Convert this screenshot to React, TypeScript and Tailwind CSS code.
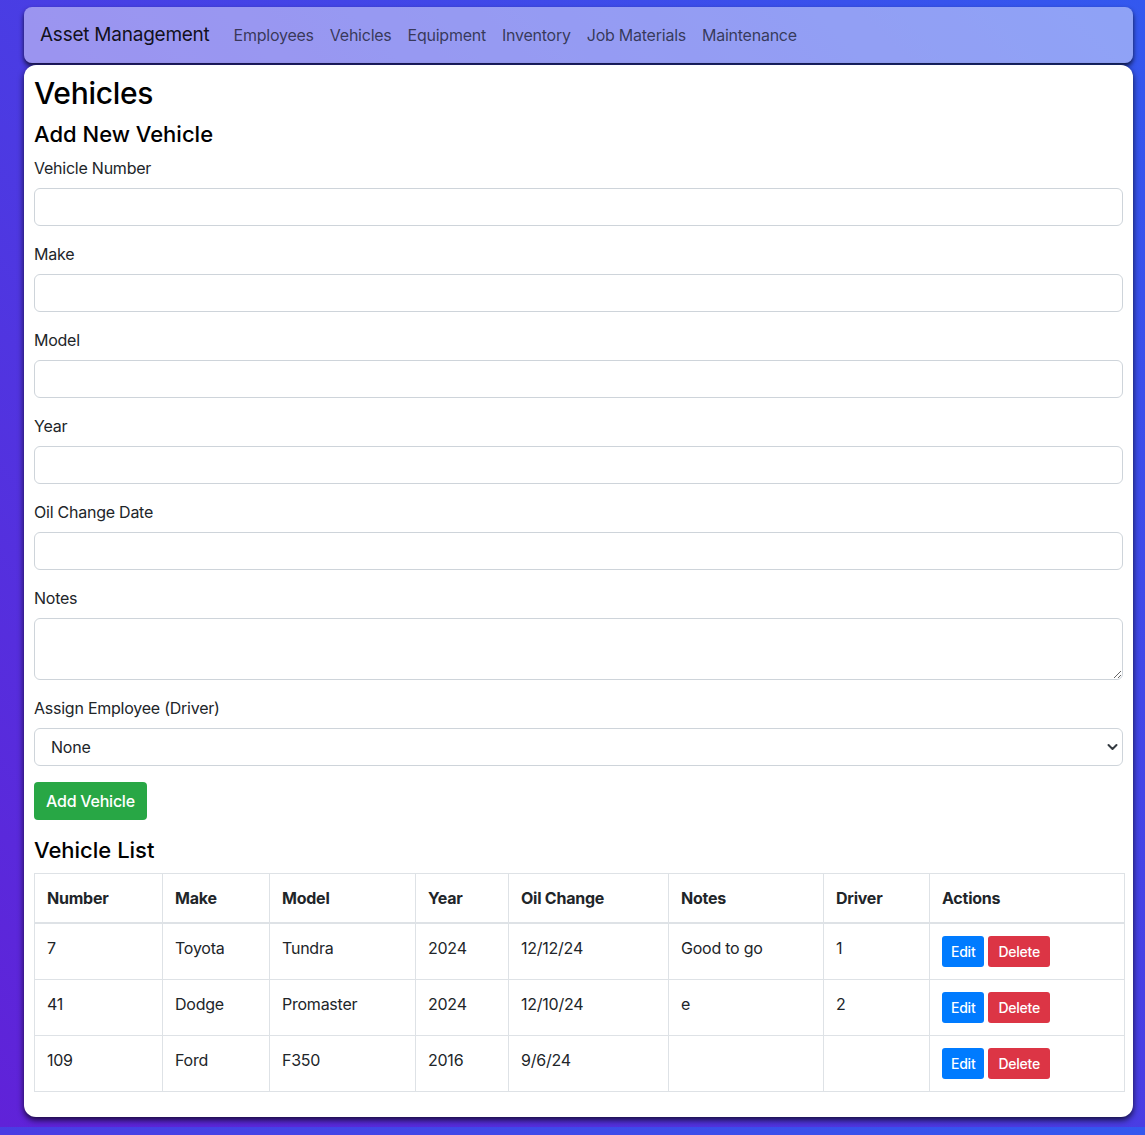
import React from 'react';

const navLinks = ['Employees', 'Vehicles', 'Equipment', 'Inventory', 'Job Materials', 'Maintenance'];

const fields = ['Vehicle Number', 'Make', 'Model', 'Year', 'Oil Change Date'];

const vehicles = [
  { number: '7', make: 'Toyota', model: 'Tundra', year: '2024', oil: '12/12/24', notes: 'Good to go', driver: '1' },
  { number: '41', make: 'Dodge', model: 'Promaster', year: '2024', oil: '12/10/24', notes: 'e', driver: '2' },
  { number: '109', make: 'Ford', model: 'F350', year: '2016', oil: '9/6/24', notes: '', driver: '' },
];

const columns = [
  { label: 'Number', w: 'w-[128px]' },
  { label: 'Make', w: 'w-[107px]' },
  { label: 'Model', w: 'w-[146px]' },
  { label: 'Year', w: 'w-[93px]' },
  { label: 'Oil Change', w: 'w-[160px]' },
  { label: 'Notes', w: 'w-[155px]' },
  { label: 'Driver', w: 'w-[106px]' },
  { label: 'Actions', w: 'w-[195px]' },
];

const inputClass = 'block w-full h-[38px] px-3 rounded-[6px] border border-[#ced4da] bg-white text-[16px] text-[#212529] outline-none';

const App: React.FC = () => {
  return (
    <div
      className="h-[1135px] pt-[7px] pl-6 pr-3 bg-[linear-gradient(to_right_top,#6022d8,#3358ef)] bg-[length:100%_1127px] bg-repeat font-['Inter','Liberation_Sans',sans-serif] tracking-[-0.015em] text-[#212529]"
    >
      {/* navbar */}
      <nav className="h-14 flex items-center px-4 rounded-lg bg-white/45 shadow-[0_3px_5px_rgba(0,0,0,0.75)]">
        <a className="text-[19px] leading-[30px] text-black/90 mr-4 cursor-pointer">Asset Management</a>
        <div className="flex flex-row">
          {navLinks.map((l) => (
            <a key={l} className="px-2 text-[16px] leading-6 text-black/65 cursor-pointer">{l}</a>
          ))}
        </div>
      </nav>

      {/* main card */}
      <div className="mt-[2px] h-[1052px] bg-white rounded-xl px-[10px] pt-[10px] shadow-[0_3px_6px_rgba(0,0,0,0.75)]">
        <h1 className="text-[30px] leading-[36px] font-medium tracking-[-0.01em] text-black mb-[9px]">Vehicles</h1>
        <h2 className="text-[22px] leading-[28px] font-medium tracking-normal text-black mb-2">Add New Vehicle</h2>

        <form onSubmit={(e) => e.preventDefault()}>
          {fields.map((f) => (
            <div key={f} className="mb-4">
              <label className="block text-[16px] leading-6 mb-2">{f}</label>
              <input className={inputClass} />
            </div>
          ))}
          <div className="mb-4">
            <label className="block text-[16px] leading-6 mb-2">Notes</label>
            <textarea rows={2} className="block w-full h-[62px] px-3 py-[6px] rounded-[6px] border border-[#ced4da] text-[16px] outline-none" />
          </div>
          <div className="mb-4">
            <label className="block text-[16px] leading-6 mb-2">Assign Employee (Driver)</label>
            <div className="relative">
              <select className="block w-full h-[38px] pl-4 pr-9 rounded-[6px] border border-[#ced4da] bg-white text-[16px] text-[#212529] appearance-none outline-none">
                <option>None</option>
              </select>
              <svg className="absolute right-[5px] top-[15px] pointer-events-none" width="11" height="8" viewBox="0 0 16 12">
                <path d="M2 3l6 6 6-6" fill="none" stroke="#343a40" strokeWidth="3" strokeLinecap="round" strokeLinejoin="round" />
              </svg>
            </div>
          </div>
          <button type="submit" className="h-[38px] px-3 rounded-[4px] bg-[#28a745] text-white text-[16px] font-medium mb-4">Add Vehicle</button>
        </form>

        <h2 className="text-[22px] leading-[28px] font-medium tracking-normal text-black mb-[9px]">Vehicle List</h2>
        <table className="w-full border-collapse border border-[#dee2e6] text-[16px] table-fixed">
          <thead>
            <tr className="border-b-2 border-[#dee2e6]">
              {columns.map((c) => (
                <th key={c.label} className={`${c.w} border border-[#dee2e6] border-b-2 p-3 text-left font-bold leading-6 align-bottom`}>{c.label}</th>
              ))}
            </tr>
          </thead>
          <tbody>
            {vehicles.map((v) => (
              <tr key={v.number}>
                <td className="border border-[#dee2e6] p-3 align-top leading-6">{v.number}</td>
                <td className="border border-[#dee2e6] p-3 align-top leading-6">{v.make}</td>
                <td className="border border-[#dee2e6] p-3 align-top leading-6">{v.model}</td>
                <td className="border border-[#dee2e6] p-3 align-top leading-6">{v.year}</td>
                <td className="border border-[#dee2e6] p-3 align-top leading-6">{v.oil}</td>
                <td className="border border-[#dee2e6] p-3 align-top leading-6">{v.notes}</td>
                <td className="border border-[#dee2e6] p-3 align-top leading-6">{v.driver}</td>
                <td className="border border-[#dee2e6] p-3 align-top leading-6">
                  <div className="flex flex-row gap-1">
                    <button className="h-[31px] px-[9px] rounded-[3px] bg-[#007bff] text-white text-[14px] font-medium">Edit</button>
                    <button className="h-[31px] px-[10px] rounded-[3px] bg-[#dc3545] text-white text-[14px] font-medium">Delete</button>
                  </div>
                </td>
              </tr>
            ))}
          </tbody>
        </table>
      </div>
    </div>
  );
};

export default App;
